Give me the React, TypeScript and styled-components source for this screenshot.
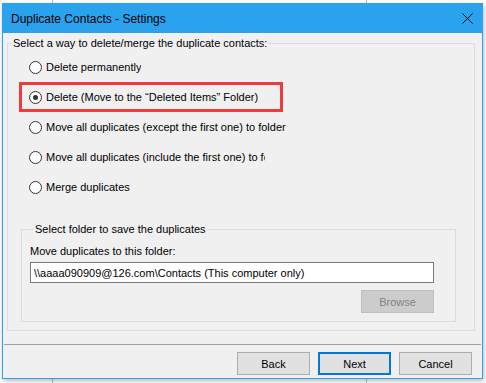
import React from 'react';
import styled, { createGlobalStyle } from 'styled-components';

const GlobalStyle = createGlobalStyle`
  html, body {
    margin: 0;
    padding: 0;
    background: #ffffff;
  }
  body {
    font-family: 'Liberation Sans', Arial, sans-serif;
    font-size: 11px;
    color: #000;
  }
`;

type Choice = {
  label: string;
  checked?: boolean;
  highlighted?: boolean;
  width?: number;
};

const choices: Choice[] = [
  { label: 'Delete permanently' },
  { label: 'Delete (Move to the \u201CDeleted Items\u201D Folder)', checked: true, highlighted: true },
  { label: 'Move all duplicates (except the first one) to folder' },
  { label: 'Move all duplicates (include the first one) to folder', width: 219 },
  { label: 'Merge duplicates' },
];

const App = () => {
  return (
    <Desktop>
      <GlobalStyle />
      <Window>
        <TitleBar>
          <Title>Duplicate Contacts - Settings</Title>
          <CloseButton aria-label="Close">
            <svg width="11" height="11" viewBox="0 0 11 11">
              <path d="M0.5 0.5 L10.5 10.5 M10.5 0.5 L0.5 10.5" stroke="#000" strokeWidth="1" />
            </svg>
          </CloseButton>
        </TitleBar>

        <Body>
          <OuterGroup>
            <Legend>Select a way to delete/merge the duplicate contacts:</Legend>
            <Options>
              {choices.map((c) => (
                <Option key={c.label} $highlighted={!!c.highlighted}>
                  <Radio $checked={!!c.checked} />
                  <OptionText $width={c.width}>{c.label}</OptionText>
                </Option>
              ))}
            </Options>

            <InnerGroup>
              <Legend>Select folder to save the duplicates</Legend>
              <FieldLabel>Move duplicates to this folder:</FieldLabel>
              <PathInput readOnly value={'\\\\aaaa090909@126.com\\Contacts (This computer only)'} />
              <BrowseRow>
                <BrowseButton disabled>Browse</BrowseButton>
              </BrowseRow>
            </InnerGroup>
          </OuterGroup>
        </Body>

        <Separator />

        <Footer>
          <DialogButton>Back</DialogButton>
          <DialogButton $primary>Next</DialogButton>
          <DialogButton>Cancel</DialogButton>
        </Footer>
      </Window>
    </Desktop>
  );
};

export default App;

const Desktop = styled.div`
  width: 486px;
  height: 383px;
  box-sizing: border-box;
  padding: 3px 3px 4px 2px;
  overflow: hidden;
  background:
    linear-gradient(to right, transparent 52px, #b9b9b9 52px, #b9b9b9 53px, transparent 53px),
    linear-gradient(to right, transparent 366px, #b9b9b9 366px, #b9b9b9 367px, transparent 367px),
    #ffffff;
`;

const Window = styled.div`
  width: 481px;
  height: 376px;
  box-sizing: border-box;
  border: 1px solid #2aa2ee;
  background: #f0f0f0;
  display: flex;
  flex-direction: column;
  box-shadow: 1px 2px 5px rgba(0, 0, 0, 0.28);
`;

const TitleBar = styled.div`
  height: 29px;
  flex-shrink: 0;
  background: #2aa2ee;
  display: flex;
  align-items: center;
  justify-content: space-between;
  padding: 0 9px 0 8px;
`;

const Title = styled.span`
  font-size: 12px;
  color: #000;
  margin-top: 1px;
`;

const CloseButton = styled.div`
  width: 11px;
  height: 11px;
  display: flex;
  margin-bottom: 1px;
`;

const Body = styled.div`
  padding: 2px 7px 0 4px;
`;

const OuterGroup = styled.fieldset`
  margin: 0;
  padding: 0 0 8px 0;
  border: 1px solid #dcdcdc;
  min-width: 0;
`;

const Legend = styled.legend`
  margin-left: 4px;
  padding: 0 1px;
  line-height: 16px;
  font-size: 11px;
  color: #000;
`;

const Options = styled.div`
  display: flex;
  flex-direction: column;
  padding: 1px 0 0 11px;
`;

const Option = styled.div<{ $highlighted: boolean }>`
  display: flex;
  align-items: center;
  height: 30px;
  box-sizing: border-box;
  border: 3px solid ${(p) => (p.$highlighted ? '#f03b3b' : 'transparent')};
  width: ${(p) => (p.$highlighted ? '264px' : 'auto')};
  padding-left: 7px;
`;

const Radio = styled.span<{ $checked: boolean }>`
  width: 11px;
  height: 11px;
  border-radius: 50%;
  border: 1px solid #333;
  background: #fff;
  flex-shrink: 0;
  display: flex;
  align-items: center;
  justify-content: center;
  margin-right: 4px;

  &::after {
    content: '';
    width: 5px;
    height: 5px;
    border-radius: 50%;
    background: ${(p) => (p.$checked ? '#333' : 'transparent')};
  }
`;

const OptionText = styled.span<{ $width?: number }>`
  white-space: nowrap;
  overflow: hidden;
  width: ${(p) => (p.$width ? `${p.$width}px` : 'auto')};
`;

const InnerGroup = styled.fieldset`
  margin: 19px 18px 0 13px;
  padding: 0 0 8px 8px;
  border: 1px solid #dcdcdc;
  min-width: 0;
  display: flex;
  flex-direction: column;
`;

const FieldLabel = styled.div`
  line-height: 16px;
  margin-top: 6px;
`;

const PathInput = styled.input`
  width: 404px;
  height: 21px;
  box-sizing: border-box;
  margin: 3px 0 0 0;
  border: 1px solid #7a7a7a;
  background: #fff;
  padding: 0 3px;
  font-family: 'Liberation Sans', Arial, sans-serif;
  font-size: 11px;
  color: #000;
  outline: none;
`;

const BrowseRow = styled.div`
  width: 404px;
  display: flex;
  justify-content: flex-end;
  margin-top: 7px;
`;

const BrowseButton = styled.button`
  width: 73px;
  height: 23px;
  box-sizing: border-box;
  border: 1px solid #bfbfbf;
  background: #cccccc;
  color: #838383;
  font-family: 'Liberation Sans', Arial, sans-serif;
  font-size: 11px;
  padding: 0;
`;

const Separator = styled.div`
  height: 1px;
  background: #a0a0a0;
  margin: 13px 1px 0 1px;
`;

const Footer = styled.div`
  display: flex;
  justify-content: flex-end;
  gap: 8px;
  padding: 7px 10px 0 0;
`;

const DialogButton = styled.button<{ $primary?: boolean }>`
  width: 73px;
  height: 23px;
  box-sizing: border-box;
  border: ${(p) => (p.$primary ? '2px solid #0078d7' : '1px solid #adadad')};
  background: #e1e1e1;
  color: #000;
  font-family: 'Liberation Sans', Arial, sans-serif;
  font-size: 11px;
  padding: 0;
`;
